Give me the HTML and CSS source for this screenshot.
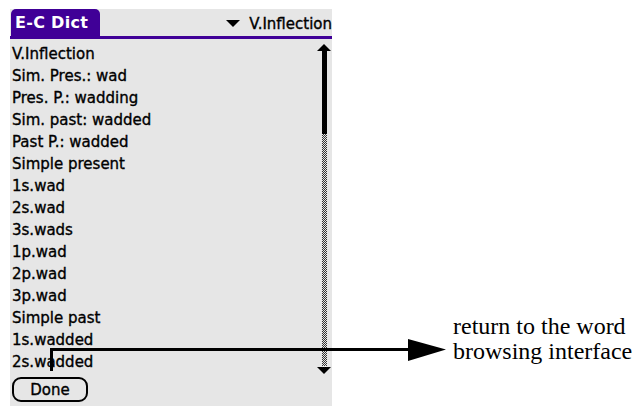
FILE: index.html
```html
<!DOCTYPE html>
<html lang="en">
<head>
  <meta charset="UTF-8" />
  <title>E-C Dict - V.Inflection</title>
  <link rel="stylesheet" href="styles.css">
</head>
<body>

<div class="figure">
  <div class="palm">
    <div class="titlebar">
      <div class="tab">E-C Dict</div>
      <div class="picker"><span class="caret"></span>V.Inflection</div>
    </div>
    <div class="content">
      <ul class="list">
        <li>V.Inflection</li>
        <li>Sim. Pres.: wad</li>
        <li>Pres. P.: wadding</li>
        <li>Sim. past: wadded</li>
        <li>Past P.: wadded</li>
        <li>Simple present</li>
        <li>1s.wad</li>
        <li>2s.wad</li>
        <li>3s.wads</li>
        <li>1p.wad</li>
        <li>2p.wad</li>
        <li>3p.wad</li>
        <li>Simple past</li>
        <li>1s.wadded</li>
        <li>2s.wadded</li>
      </ul>
      <div class="scrollbar">
        <span class="arrow up"></span>
        <span class="thumb"></span>
        <span class="track"></span>
        <span class="arrow down"></span>
      </div>
    </div>
    <button class="done">Done</button>
  </div>

  <div class="note">return to the word<br>browsing interface</div>

  <svg class="callout" width="637" height="406" viewBox="0 0 637 406">
    <path d="M51.5 371 V349.5 H410" fill="none" stroke="#000" stroke-width="3"/>
    <polygon points="408,339 446,349.5 408,361" fill="#000"/>
  </svg>
</div>

</body>
</html>
```

FILE: styles.css
```css
html, body {
  margin: 0;
  padding: 0;
  background: #fff;
}
.figure {
  position: relative;
  width: 637px;
  height: 406px;
  overflow: hidden;
  display: flex;
  align-items: flex-start;
}
.palm {
  margin: 9px 0 0 10px;
  width: 322px;
  height: 397px;
  background: #e6e6e6;
  font-family: "DejaVu Sans", sans-serif;
  font-size: 15px;
  color: #000;
  -webkit-text-stroke: 0.35px #000;
  display: flex;
  flex-direction: column;
}
.titlebar {
  height: 27px;
  border-bottom: 3px solid #400097;
  display: flex;
  align-items: stretch;
  justify-content: space-between;
  overflow: hidden;
}
.tab {
  background: #400097;
  color: #fff;
  -webkit-text-stroke: 0;
  font-weight: bold;
  font-size: 16px;
  margin-left: 1px;
  padding: 4px 8px 0 4px;
  width: 77px;
  border-radius: 5px 5px 0 0;
  letter-spacing: 0.3px;
}
.picker {
  display: flex;
  align-items: center;
  white-space: nowrap;
  padding-top: 2px;
}
.caret {
  width: 0;
  height: 0;
  border-left: 7px solid transparent;
  border-right: 7px solid transparent;
  border-top: 7px solid #000;
  margin-right: 9px;
}
.content {
  display: flex;
  justify-content: space-between;
  padding-top: 4px;
}
.list {
  list-style: none;
  margin: 0;
  padding: 0 0 0 2px;
}
.list li {
  height: 22px;
  line-height: 22px;
}
.scrollbar {
  width: 14px;
  margin-right: 1px;
  padding-top: 1px;
  display: flex;
  flex-direction: column;
  align-items: center;
}
.arrow {
  width: 0;
  height: 0;
  border-left: 7px solid transparent;
  border-right: 7px solid transparent;
}
.arrow.up {
  border-bottom: 7px solid #000;
}
.arrow.down {
  border-top: 7px solid #000;
  margin-top: 1px;
}
.thumb {
  width: 5px;
  height: 83px;
  background: #000;
}
.track {
  width: 5px;
  height: 232px;
  background-color: #e6e6e6;
  background-image:
    linear-gradient(45deg, #333 25%, transparent 25%, transparent 75%, #333 75%),
    linear-gradient(45deg, #333 25%, transparent 25%, transparent 75%, #333 75%);
  background-size: 2px 2px;
  background-position: 0 0, 1px 1px;
}
.done {
  align-self: flex-start;
  margin: 3px 0 0 2px;
  width: 76px;
  height: 25px;
  border: 2px solid #000;
  border-radius: 9px;
  background: #e6e6e6;
  font-family: "DejaVu Sans", sans-serif;
  font-size: 15px;
  color: #000;
  -webkit-text-stroke: 0.35px #000;
  padding: 0;
}
.note {
  margin: 314px 0 0 121px;
  font-family: "Liberation Serif", serif;
  font-size: 24px;
  line-height: 25px;
  white-space: nowrap;
}
.callout {
  position: absolute;
  left: 0;
  top: 0;
  pointer-events: none;
}
```
